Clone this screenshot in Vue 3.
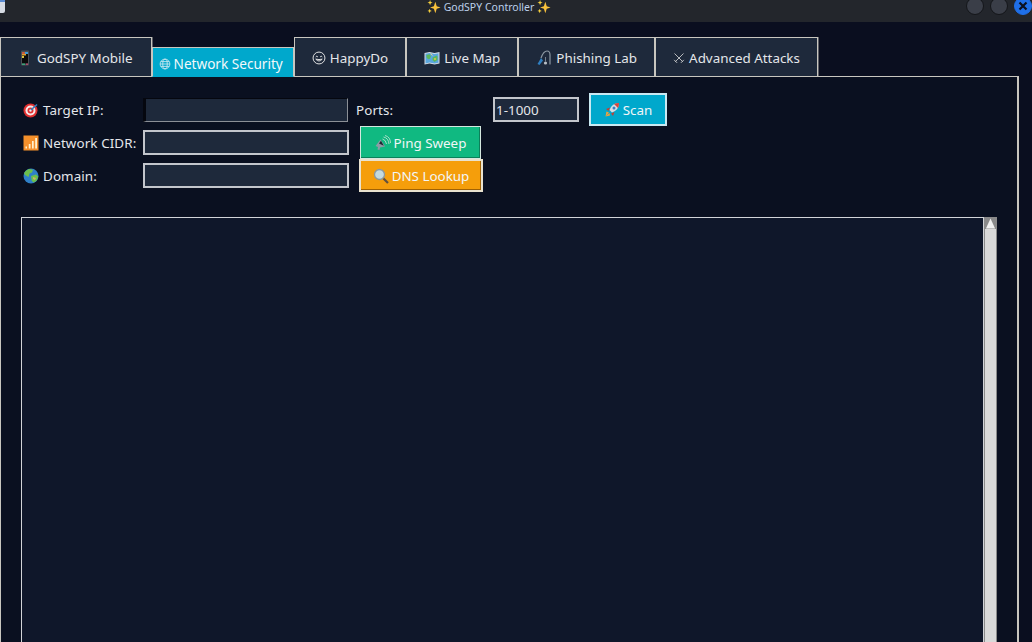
<template>
  <div class="window">
    <header class="titlebar">
      <span class="app-icon"></span>
      <span class="title">
        <svg class="spark" viewBox="0 0 16 16"><path d="M9.500 2l1.600 5 4.400 1.500-4.400 1.500-1.600 5-1.600-5-4.400-1.500 4.400-1.500z" fill="#f9c23c"/><path d="M3.500 0l.8 2.200 2.200.8-2.200.8-.8 2.200-.8-2.200L.5 3l2.200-.8zM3 10l.7 1.800 1.800.7-1.800.7L3 15l-.7-1.800-1.800-.7 1.800-.7z" fill="#fcd53f"/></svg>
        GodSPY Controller
        <svg class="spark" viewBox="0 0 16 16"><path d="M9.500 2l1.600 5 4.400 1.500-4.400 1.500-1.600 5-1.600-5-4.400-1.500 4.400-1.500z" fill="#f9c23c"/><path d="M3.500 0l.8 2.200 2.200.8-2.200.8-.8 2.200-.8-2.200L.5 3l2.200-.8zM3 10l.7 1.800 1.800.7-1.800.7L3 15l-.7-1.800-1.800-.7 1.800-.7z" fill="#fcd53f"/></svg>
      </span>
      <div class="win-btns">
        <span class="win-btn"></span>
        <span class="win-btn"></span>
        <span class="win-btn close">
          <svg viewBox="0 0 10 10"><path d="M1.500 1.500l7 7M8.500 1.500l-7 7" stroke="#0b1020" stroke-width="2.200"/></svg>
        </span>
      </div>
    </header>

    <main class="body">
      <nav class="tabs">
        <div class="tab">
          <svg class="ico" viewBox="0 0 16 16"><rect x="4" y="0.500" width="8" height="15" rx="1" fill="#4a4f55"/><rect x="5" y="2" width="6" height="11.500" fill="#0a0a0a"/><rect x="5" y="2" width="3" height="2" fill="#c75b3a"/><rect x="8" y="2" width="3" height="2" fill="#3a9ad9"/><rect x="5" y="4" width="4" height="1.500" fill="#e0a030"/><rect x="5" y="6" width="2" height="2" fill="#d8c040"/><rect x="5" y="13.500" width="3" height="1.500" fill="#3aa37a"/><rect x="9" y="13.500" width="2" height="1.500" fill="#b0486a"/></svg>
          GodSPY Mobile
        </div>
        <div class="tab active">
          <svg class="ico small" viewBox="0 0 16 16" fill="none" stroke="#cfe9f2" stroke-width="1.100"><circle cx="8" cy="8" r="6.500"/><ellipse cx="8" cy="8" rx="3" ry="6.500"/><path d="M1.500 8h13M2.500 4.800h11M2.500 11.200h11"/></svg>
          Network Security
        </div>
        <div class="tab">
          <svg class="ico smiley" viewBox="0 0 16 16" fill="none" stroke="#e6e6e6" stroke-width="1.100"><circle cx="8" cy="8" r="6.800"/><path d="M4.300 6.800q1.200-1.800 2.400 0M9.300 6.800q1.200-1.800 2.400 0M4.300 9.300q3.700 4.200 7.400 0q-3.700 1-7.400 0z"/></svg>
          HappyDo
        </div>
        <div class="tab">
          <svg class="ico" viewBox="0 0 16 16"><path d="M0.500 3l5-1 5 1 5-1v11.500l-5 1-5-1-5 1z" fill="#d5dde5"/><path d="M1.500 3.800l4-.8 5 1 4-.8v9.600l-4 .8-5-1-4 .8z" fill="#5aa7de"/><path d="M2.500 5l3-.8 1.500 2-1 2.500-2 .5-1.500-2zM8.500 7.500l4-2 1 1v3.500l-3 2-2-2z" fill="#5cb85c"/><path d="M6.500 3.500l2 2" stroke="#ecd67c"/><circle cx="11" cy="9" r="1" fill="#e6c34a"/></svg>
          Live Map
        </div>
        <div class="tab">
          <svg class="ico" viewBox="0 0 16 16" fill="none"><path d="M14 14.500V5q0-4-3-4Q7.500 1 5 8" stroke="#8c98a3" stroke-width="1.200"/><path d="M1.500 14l3.500-6 2 2.500-3.500 4.500z" fill="#2f7fc1"/><circle cx="9.500" cy="13" r="1.600" fill="#b9bfc6"/><path d="M9.500 11.500V7" stroke="#8c98a3" stroke-width=".8"/></svg>
          Phishing Lab
        </div>
        <div class="tab">
          <svg class="ico small" viewBox="0 0 16 16" fill="none" stroke="#d8d8d8" stroke-width="1.100"><path d="M2 2l11 11M14 2L3 13M1.500 10.500l4 4M14.500 10.500l-4 4"/></svg>
          Advanced Attacks
        </div>
      </nav>

      <section class="panel">
        <div class="form">
          <label class="lbl">
            <svg class="ico" viewBox="0 0 16 16"><circle cx="7.500" cy="8.500" r="7" fill="#e02f2f"/><circle cx="7.500" cy="8.500" r="5" fill="#f6e8e8"/><circle cx="7.500" cy="8.500" r="3" fill="#e02f2f"/><circle cx="7.500" cy="8.500" r="1.200" fill="#f6e8e8"/><path d="M8 8l6-5.500" stroke="#2f7fc1" stroke-width="1.600"/></svg>
            Target IP:
          </label>
          <input class="entry entry-focus" />
          <label class="lbl ports-lbl">Ports:</label>
          <input class="entry ports" value="1-1000" />
          <button class="btn scan">
            <svg class="ico" viewBox="0 0 16 16"><path d="M15 1q-7 0-9.500 7l2.500 2.500q7-2.500 7-9.500z" fill="#d9dde3"/><path d="M15 1q-3 0-5 1l4 4q1-2 1-5z" fill="#d6473d"/><circle cx="10" cy="6" r="1.500" fill="#3a7fc1"/><path d="M6 5.500L2 7l2.500 2zM10.500 10L9 14l-2-2.500z" fill="#c23f36"/><path d="M5 10.500L1.500 14.500l1-5zM5.500 11L1.500 14.500l4.500-1z" fill="#f4a23a"/></svg>
            Scan
          </button>

          <label class="lbl row-start">
            <svg class="ico" viewBox="0 0 16 16"><rect x="0.500" y="0.500" width="15" height="15" fill="#f4902b"/><path d="M2.500 13.500H4v-2H2.500zM5.800 13.500h1.700V9H5.800zM9 13.500h1.700V6H9zM12.200 13.500H14V3h-1.800z" fill="#fff0cc"/></svg>
            Network CIDR:
          </label>
          <input class="entry" />
          <button class="btn ping">
            <svg class="ico" viewBox="0 0 16 16" fill="none"><path d="M0.500 11l5-6.500 4.500 7-5 1-.5 2.500-2-.5.5-2.500z" fill="#8d9ba5"/><path d="M4 8.500l2-2.800 2.800 5z" fill="#1d2730"/><path d="M7.500 4q3.500 1 4 5M8.500 2q5 1 5.500 7M10 0.500q5.500 1.500 5.500 7.500" stroke="#a9dcc6" stroke-width="1"/></svg>
            Ping Sweep
          </button>

          <label class="lbl row-start">
            <svg class="ico" viewBox="0 0 16 16"><circle cx="8" cy="8" r="7.500" fill="#2f80c8"/><path d="M6 1l4 .8-1 2.700-2.500 1-1 3.500-3.500-2-1-2Q3 2 6 1zM8 8l5-1.500 2.300 2-1.500 4-3 2-2-1.500z" fill="#6cbf4b"/><path d="M10 9l3 1-1 2-2-1z" fill="#c9b368"/></svg>
            Domain:
          </label>
          <input class="entry" />
          <button class="btn dns">
            <svg class="ico" viewBox="0 0 16 16" fill="none"><circle cx="6.500" cy="6.500" r="5" fill="#c4dadf" stroke="#8a979e" stroke-width="1.300"/><path d="M10.500 10.500l4.500 4.500" stroke="#5f5040" stroke-width="2.200"/></svg>
            DNS Lookup
          </button>
        </div>

        <div class="output">
          <div class="text-area"></div>
          <div class="scrollbar">
            <div class="arrow"><svg viewBox="0 0 12 12"><path d="M6 0.500l5 11H1z" fill="#f0f0f0"/></svg></div>
            <div class="thumb"></div>
          </div>
        </div>
      </section>
    </main>
  </div>
</template>

<script setup>
</script>

<style>
html, body {
  margin: 0;
  background: #0a0e1f;
  overflow: hidden;
}
</style>

<style scoped>
.window {
  width: 1032px;
  height: 642px;
  display: flex;
  flex-direction: column;
  overflow: hidden;
  font-family: "Noto Sans", sans-serif;
  font-size: 13.400px;
  color: #e4e6ea;
  background: #0a0e1f;
}

.titlebar {
  height: 22px;
  flex: none;
  background: #23262c;
  position: relative;
  display: flex;
  align-items: center;
  justify-content: center;
}
.app-icon {
  position: absolute;
  left: 0;
  top: 0;
  width: 5px;
  height: 13px;
  background: #d6dbe4;
  border-top: 2px solid #5a8ad0;
  box-sizing: border-box;
  border-radius: 0 0 2px 0;
}
.title {
  font-size: 10.500px;
  color: #bcd0ea;
  display: flex;
  align-items: center;
  gap: 3px;
  margin-top: -8px;
  margin-left: -54px;
}
.spark {
  width: 14px;
  height: 14px;
}
.win-btns {
  position: absolute;
  right: 0;
  top: -3px;
  display: flex;
  gap: 6px;
}
.win-btn {
  width: 18px;
  height: 18px;
  box-sizing: border-box;
  border-radius: 50%;
  background: #3a3e48;
  border: 1px solid #14161a;
}
.win-btn.close {
  background: #1f6fe8;
  border-color: #1f6fe8;
  display: flex;
  align-items: center;
  justify-content: center;
}
.win-btn.close svg {
  width: 10px;
  height: 10px;
}

.body {
  flex: 1;
  padding-top: 15px;
  min-height: 0;
  display: flex;
  flex-direction: column;
}

.tabs {
  display: flex;
  align-items: flex-end;
  height: 40px;
  flex: none;
  position: relative;
  z-index: 1;
}
.tab {
  height: 40px;
  box-sizing: border-box;
  padding: 2px 17px 0;
  display: flex;
  align-items: center;
  justify-content: center;
  gap: 4px;
  background: #1e293b;
  border: 1px solid #c8c6bf;
  box-shadow: 1px 0 0 rgba(200, 198, 191, 0.45);
  white-space: nowrap;
}
.tab:first-child {
  padding-left: 16px;
  padding-right: 18px;
}
.tab.active {
  height: 30px;
  background: #00a8cc;
  color: #f2f8fa;
  border-bottom-color: #00a8cc;
  padding: 3px 10px 0 6px;
  gap: 3px;
  font-size: 13.600px;
}
.ico {
  width: 16px;
  height: 16px;
  flex: none;
}
.ico.small {
  width: 12px;
  height: 12px;
}
.ico.smiley {
  width: 14px;
  height: 14px;
}

.panel {
  flex: 1;
  min-height: 0;
  width: 1019px;
  box-sizing: border-box;
  margin-top: -1px;
  background: #0a1020;
  border: 1px solid #c8c6bf;
  border-bottom: 0;
  border-right-width: 2px;
  padding: 16px 20px 0 20px;
}

.form {
  display: grid;
  grid-template-columns: 122px 206px 144px 86px 10px 78px;
  grid-template-rows: 33px 33px 33px;
  align-items: center;
}
.lbl {
  display: flex;
  align-items: center;
  gap: 4px;
  padding-left: 2px;
  letter-spacing: 0.1px;
}
.row-start {
  grid-column: 1;
}
.ports-lbl {
  padding-left: 7px;
}
.entry {
  box-sizing: border-box;
  width: 100%;
  height: 25px;
  border: 2px solid #c3c6cc;
  background: #1e293b;
  color: #e4e6ea;
  font: inherit;
  padding: 0 1px;
  outline: none;
}
.entry-focus {
  width: 205px;
  height: 24px;
  border: 1px solid #8b8f96;
  border-left: 3px solid #05070f;
  border-top-color: #05070f;
}
.ports {
  grid-column: 4;
}
.btn {
  font: inherit;
  color: #f2f6f8;
  box-sizing: border-box;
  border: 2px solid #e3ece8;
  display: flex;
  align-items: center;
  justify-content: center;
  gap: 3px;
  padding: 0;
  height: 33px;
}
.scan {
  grid-column: 6;
  background: #00a8cc;
  border-color: #c9e9f2;
}
.ping {
  grid-column: 3 / 5;
  width: 121px;
  margin-left: 11px;
  background: #10b981;
  border: 1px solid #d5e8df;
  box-shadow: inset -1px -1px 0 rgba(0, 0, 0, 0.3);
}
.dns {
  grid-column: 3 / 5;
  width: 124px;
  margin-left: 10px;
  background: #f59e0b;
  border-color: #e9e2cf;
  box-shadow: inset -1px -1px 0 rgba(90, 50, 0, 0.55);
}

.output {
  margin-top: 25px;
  display: flex;
  height: 440px;
  width: 976px;
}
.text-area {
  flex: 1;
  background: #0f172a;
  border: 1px solid #d2d4d8;
  border-bottom: 0;
}
.scrollbar {
  width: 13px;
  flex: none;
  display: flex;
  flex-direction: column;
  border-left: 1px solid #8a8a8a;
  border-right: 1px solid #8a8a8a;
  box-sizing: border-box;
  background: #d9d9d9;
}
.arrow {
  height: 12px;
  background: #8a8a8a;
  display: flex;
  align-items: center;
  justify-content: center;
}
.arrow svg {
  width: 11px;
  height: 11px;
}
.thumb {
  flex: 1;
  background: #d9d9d9;
}
</style>
